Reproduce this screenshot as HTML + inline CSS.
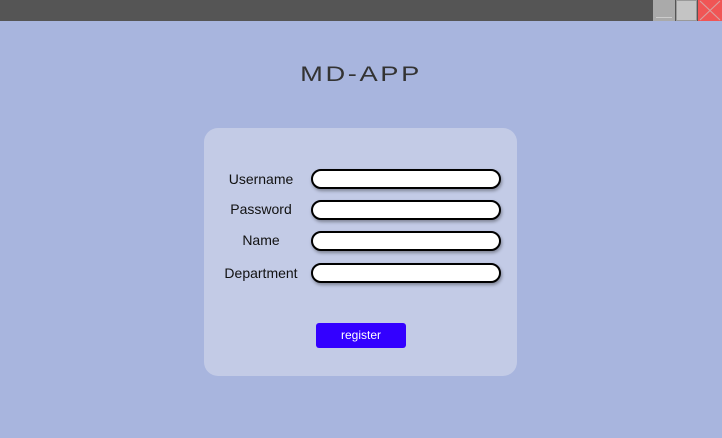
<!DOCTYPE html>
<html><head><style>
body{margin:0;width:722px;height:438px;background:#a8b5de;position:relative;overflow:hidden;font-family:"Liberation Sans",sans-serif}
.bar{position:absolute;left:0;top:0;width:722px;height:21px;background:#555}
.b1{position:absolute;left:653px;top:0;width:22px;height:21px;background:#aaa}
.b1:after{content:"";position:absolute;left:3px;right:3px;bottom:3px;height:1px;background:#ccc}
.b2{position:absolute;left:676px;top:0;width:21px;height:21px;background:#c4c4c4;box-sizing:border-box;border:1px solid #999}
.b3{position:absolute;left:698px;top:0;width:24px;height:21px;background:#f05555}
.title{position:absolute;left:0;width:722px;top:63px;text-align:center;font-size:21px;color:#333;letter-spacing:2px;transform:scaleX(1.3);font-weight:300}
.card{position:absolute;left:204px;top:128px;width:313px;height:248px;background:#c3cbe6;border-radius:14px}
.lbl{position:absolute;width:120px;left:201px;text-align:center;font-size:14px;color:#111}
.in{position:absolute;left:311px;width:190px;height:20px;box-sizing:border-box;background:#fff;border:2px solid #000;border-radius:10px;box-shadow:1px 2px 3px rgba(0,0,0,.35)}
.btn{position:absolute;left:316px;top:323px;width:90px;height:25px;background:#3300ff;border-radius:3px;color:#fff;font-size:12px;text-align:center;line-height:25px}
</style></head><body>
<div class="bar"></div><div class="b1"></div><div class="b2"></div>
<div class="b3"><svg width="24" height="21"><path d="M2 1L22 20M22 1L2 20" stroke="#d9a0a0" stroke-width="1.2"/></svg></div>
<div class="title">MD-APP</div>
<div class="card"></div>
<div class="lbl" style="top:171px">Username</div>
<div class="lbl" style="top:201px">Password</div>
<div class="lbl" style="top:232px">Name</div>
<div class="lbl" style="top:265px">Department</div>
<div class="in" style="top:169px"></div>
<div class="in" style="top:200px"></div>
<div class="in" style="top:231px"></div>
<div class="in" style="top:263px"></div>
<div class="btn">register</div>
</body></html>
